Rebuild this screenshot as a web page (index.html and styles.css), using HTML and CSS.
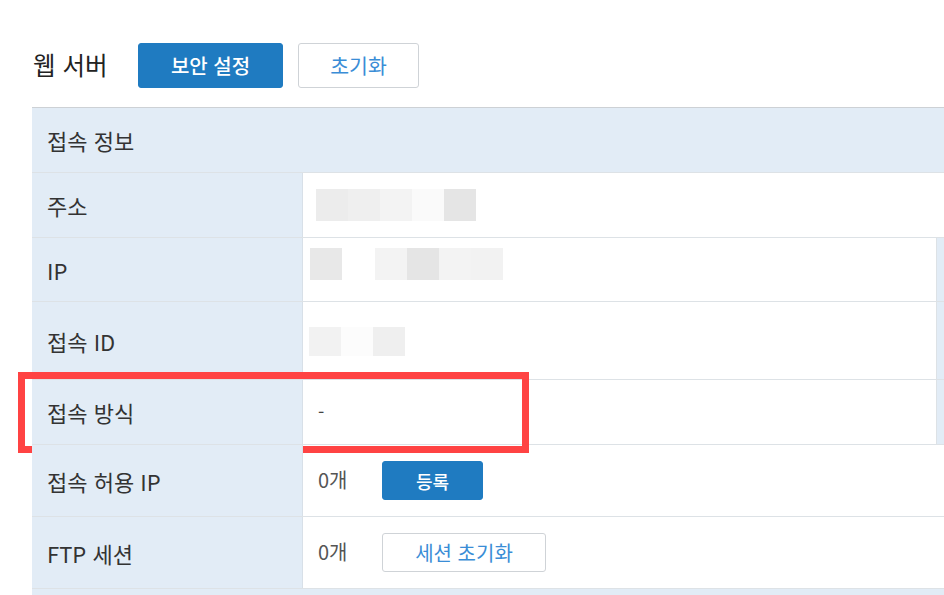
FILE: index.html
```html
<!DOCTYPE html>
<html lang="ko">
<head>
<meta charset="utf-8">
<link rel="stylesheet" href="styles.css">
</head>
<body>
<div class="page">
  <div class="toolbar">
    <h1 class="title">웹 서버</h1>
    <button class="btn btn-primary btn-lg">보안 설정</button>
    <button class="btn btn-outline btn-lg btn-reset">초기화</button>
  </div>

  <div class="table">
    <div class="row head"><div class="label">접속 정보</div></div>

    <div class="row r-addr">
      <div class="label">주소</div>
      <div class="value">
        <span class="blur blur-addr"><i class="c1"></i><i class="c2"></i><i class="c3"></i><i class="c5"></i><i class="c6"></i></span>
      </div>
    </div>

    <div class="row r-ip with-stripe">
      <div class="label">IP</div>
      <div class="value">
        <span class="blur blur-ip"><i class="c4"></i><i class="gap"></i><i class="c3"></i><i class="c6"></i><i class="c3"></i><i class="c7"></i></span>
      </div>
      <div class="stripe"></div>
    </div>

    <div class="row r-id with-stripe">
      <div class="label">접속 ID</div>
      <div class="value">
        <span class="blur blur-id"><i class="c7"></i><i class="c8"></i><i class="c2"></i></span>
      </div>
      <div class="stripe"></div>
    </div>

    <div class="row r-method with-stripe">
      <div class="label">접속 방식</div>
      <div class="value"><span class="dash">-</span></div>
      <div class="stripe"></div>
      <div class="highlight"></div>
    </div>

    <div class="row r-allow">
      <div class="label">접속 허용 IP</div>
      <div class="value">
        <span class="count">0개</span>
        <button class="btn btn-primary btn-sm btn-register">등록</button>
      </div>
    </div>

    <div class="row r-ftp">
      <div class="label">FTP 세션</div>
      <div class="value">
        <span class="count">0개</span>
        <button class="btn btn-outline btn-sm btn-session">세션 초기화</button>
      </div>
    </div>

    <div class="row tail"></div>
  </div>
</div>
</body>
</html>
```

FILE: styles.css
```css
* { box-sizing: border-box; }

html, body {
  margin: 0;
  padding: 0;
  background: #ffffff;
  overflow: hidden;
}

body {
  font-family: "Noto Sans CJK KR", "Noto Sans", sans-serif;
  color: #333333;
}

.page {
  width: 944px;
  height: 595px;
  padding-left: 32px;
  overflow: hidden;
}

/* toolbar */
.toolbar {
  display: flex;
  align-items: center;
  height: 107px;
  padding-top: 24px;
}

.title {
  margin: 0 0 0 1px;
  width: 105px;
  font-size: 24.5px;
  font-weight: 400;
  color: #222222;
  line-height: 1;
  white-space: nowrap;
}

.btn {
  font-family: inherit;
  border-radius: 3px;
  display: inline-flex;
  align-items: center;
  justify-content: center;
  cursor: pointer;
  padding: 0;
  line-height: 1;
}

.btn-primary {
  background: #1f7bc1;
  border: 1px solid #1f7bc1;
  color: #ffffff;
  font-weight: 500;
}

.btn-outline {
  background: #ffffff;
  border: 1px solid #cfd3d7;
  color: #3a8dd6;
  font-weight: 400;
}

.btn-lg {
  height: 45px;
  width: 145px;
  font-size: 20px;
}

.btn-reset {
  width: 121px;
  margin-left: 15px;
  font-size: 20.5px;
}

.btn-sm {
  height: 39px;
  font-size: 18px;
}

.btn-register { width: 101px; }
.btn-session { width: 164px; font-size: 20px; }

/* table */
.table {
  width: 912px;
  border-top: 1px solid #cdd1d5;
}

.row {
  display: grid;
  grid-template-columns: 271px 1fr;
  border-bottom: 1px solid #dde2e6;
  position: relative;
}

.row.with-stripe {
  grid-template-columns: 271px 1fr 8px;
}

.label {
  background: #e2ecf6;
  border-right: 1px solid #d8e0e8;
  display: flex;
  align-items: center;
  padding-left: 15px;
  font-size: 22px;
  color: #333333;
  white-space: nowrap;
}

.value {
  display: flex;
  align-items: center;
  padding-left: 15px;
  font-size: 20px;
  color: #555555;
}

.stripe {
  background: #e2ecf6;
  border-left: 1px solid #dde2e6;
}

.head {
  grid-template-columns: 1fr;
  height: 65px;
  background: #e2ecf6;
}
.head .label { border-right: 0; }

.r-addr { height: 65px; }
.r-ip { height: 64px; }
.r-id { height: 78px; }
.r-method { height: 65px; }
.r-allow { height: 72px; }
.r-ftp { height: 72px; }

.tail {
  height: 20px;
  background: #e2ecf6;
  border-bottom: 0;
  grid-template-columns: 1fr;
}

/* blurred placeholder blocks */
.blur { display: inline-flex; }
.blur i { display: block; width: 32px; height: 100%; }
.blur-addr { height: 32px; margin-left: -2px; margin-top: 0; }
.blur-ip { height: 32px; margin-left: -8px; margin-top: -12px; }
.blur-id { height: 29px; margin-left: -9px; margin-top: 1px; }
.blur i.gap { width: 33px; }
.c1 { background: #ececec; }
.c2 { background: #efefef; }
.c3 { background: #f3f3f3; }
.c4 { background: #e8e8e8; }
.c5 { background: #fafafa; }
.c6 { background: #e5e5e5; }
.c7 { background: #f2f2f2; }
.c8 { background: #fcfcfc; }

.dash {
  font-size: 18px;
  color: #444444;
  margin-top: -2px;
}

.count {
  width: 64px;
  color: #555555;
  font-size: 20px;
  margin-top: -3px;
}

/* red annotation box */
.highlight {
  position: absolute;
  left: -14px;
  top: -8px;
  width: 511px;
  height: 81px;
  border: 7px solid #ff4343;
  pointer-events: none;
}
```
